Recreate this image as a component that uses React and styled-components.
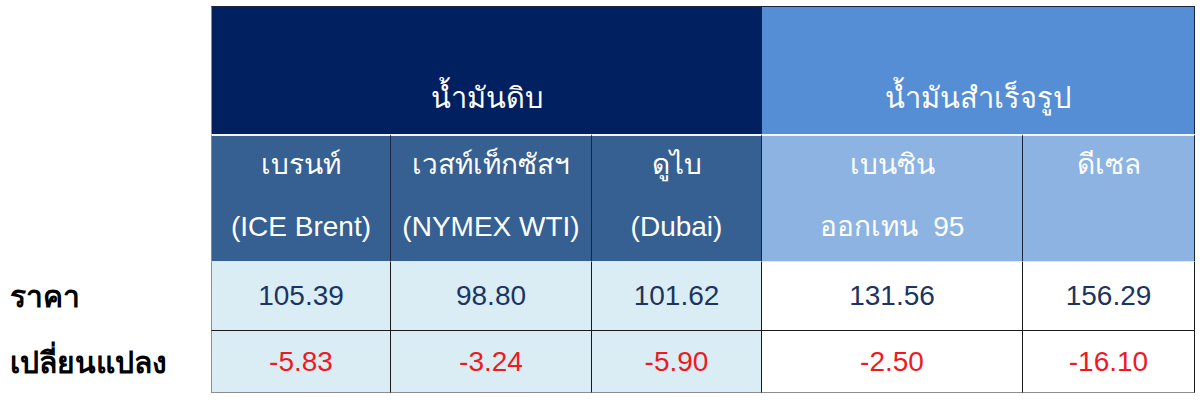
import React from "react";
import styled, { createGlobalStyle } from "styled-components";

const GlobalStyle = createGlobalStyle`
  body {
    margin: 0;
    background: #ffffff;
    font-family: "Liberation Sans", "Noto Sans", sans-serif;
  }
`;

const Board = styled.div`
  display: grid;
  grid-template-columns: 211px 180px 201px 170px 261px 172px;
  grid-template-rows: 128px 128px 69px 62px;
  padding-top: 6px;
  width: 1195px;
`;

const Blank = styled.div``;

const GroupHeader = styled.div`
  grid-column: span ${(p) => p.span};
  background: ${(p) => p.bg};
  color: #ffffff;
  font-size: 29px;
  display: flex;
  align-items: flex-end;
  justify-content: center;
  padding-bottom: 13px;
  box-sizing: border-box;
  border-top: 1px solid #1b2540;
  border-left: ${(p) => (p.first ? "1px solid #7f8894" : "none")};
  border-right: ${(p) => (p.last ? "1px solid #1b2540" : "none")};
`;

const SubHeader = styled.div`
  background: ${(p) => p.bg};
  color: #ffffff;
  font-size: 28px;
  display: flex;
  flex-direction: column;
  align-items: center;
  padding-top: 8px;
  gap: 20px;
  box-sizing: border-box;
  border-top: 2px solid #f2f6fb;
  border-bottom: 1px solid #dde6ef;
  border-left: ${(p) => (p.first ? "1px solid #7f8894" : "none")};
  border-right: 1px solid #1b2540;
`;

const Line = styled.span`
  line-height: 42px;
  white-space: pre;
`;

const RowLabel = styled.div`
  display: flex;
  align-items: center;
  padding-left: 10px;
  font-size: 30px;
  font-weight: bold;
  color: #000000;
`;

const Value = styled.div`
  background: ${(p) => (p.shaded ? "#dbedf4" : "#ffffff")};
  color: ${(p) => (p.negative ? "#ef1a1f" : "#1c3461")};
  font-size: 28px;
  display: flex;
  align-items: center;
  justify-content: center;
  box-sizing: border-box;
  border-right: 1px solid #1a1a1a;
  border-bottom: 1px solid ${(p) => (p.lastRow ? "#8c8c8c" : "#1a1a1a")};
  border-left: ${(p) => (p.first ? "1px solid #8c8c8c" : "none")};
`;

const subHeaders = [
  { lines: ["เบรนท์", "(ICE Brent)"], bg: "#366092" },
  { lines: ["เวสท์เท็กซัสฯ", "(NYMEX WTI)"], bg: "#366092" },
  { lines: ["ดูไบ", "(Dubai)"], bg: "#366092" },
  { lines: ["เบนซิน", "ออกเทน  95"], bg: "#8db3e2" },
  { lines: ["ดีเซล"], bg: "#8db3e2" },
];

const prices = ["105.39", "98.80", "101.62", "131.56", "156.29"];
const changes = ["-5.83", "-3.24", "-5.90", "-2.50", "-16.10"];

const App = () => {
  return (
    <>
      <GlobalStyle />
      <Board>
        <Blank />
        <GroupHeader span={3} bg="#002060" first>
          น้ำมันดิบ
        </GroupHeader>
        <GroupHeader span={2} bg="#558ed5" last>
          น้ำมันสำเร็จรูป
        </GroupHeader>

        <Blank />
        {subHeaders.map((h, i) => (
          <SubHeader key={i} bg={h.bg} first={i === 0}>
            {h.lines.map((l) => (
              <Line key={l}>{l}</Line>
            ))}
          </SubHeader>
        ))}

        <RowLabel>ราคา</RowLabel>
        {prices.map((v, i) => (
          <Value key={v} shaded={i < 3} first={i === 0}>
            {v}
          </Value>
        ))}

        <RowLabel>เปลี่ยนแปลง</RowLabel>
        {changes.map((v, i) => (
          <Value key={v} shaded={i < 3} first={i === 0} negative lastRow>
            {v}
          </Value>
        ))}
      </Board>
    </>
  );
};

export default App;
